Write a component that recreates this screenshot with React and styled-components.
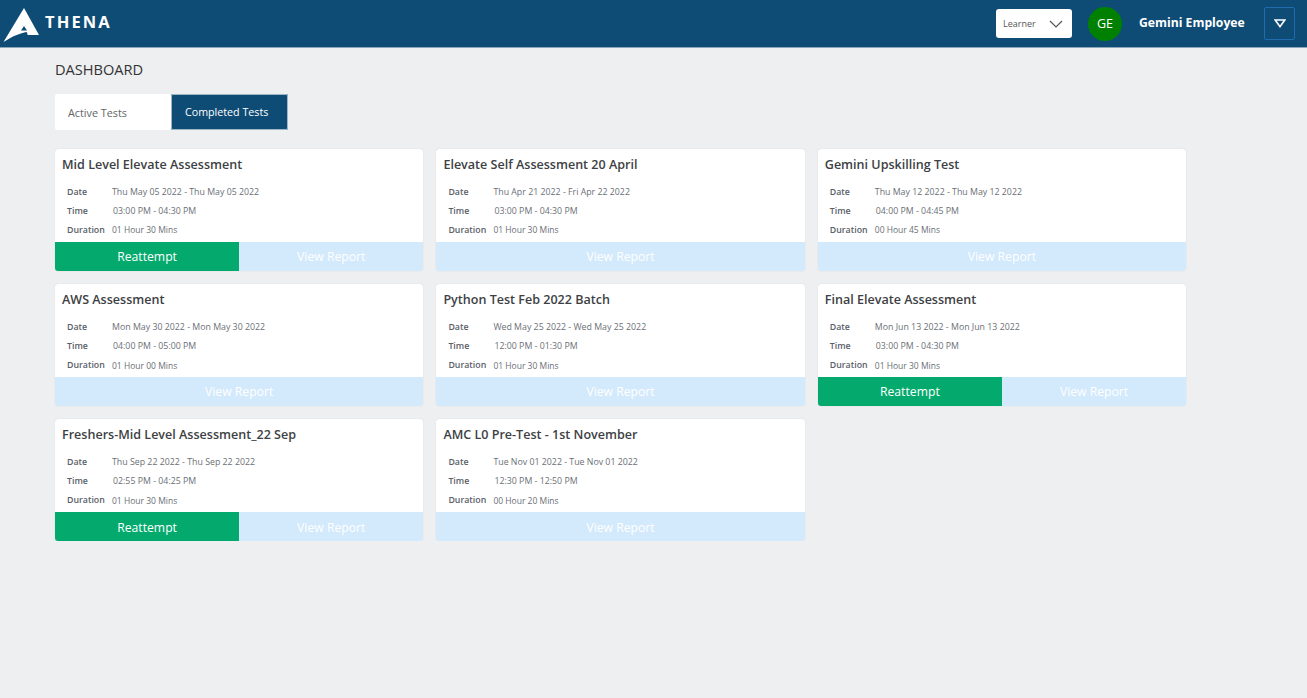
import styled, { createGlobalStyle } from 'styled-components';

const tests = [
    { title: 'Mid Level Elevate Assessment', date: 'Thu May 05 2022 - Thu May 05 2022', time: '03:00 PM - 04:30 PM', duration: '01 Hour 30 Mins', reattempt: true },
    { title: 'Elevate Self Assessment 20 April', date: 'Thu Apr 21 2022 - Fri Apr 22 2022', time: '03:00 PM - 04:30 PM', duration: '01 Hour 30 Mins' },
    { title: 'Gemini Upskilling Test', date: 'Thu May 12 2022 - Thu May 12 2022', time: '04:00 PM - 04:45 PM', duration: '00 Hour 45 Mins' },
    { title: 'AWS Assessment', date: 'Mon May 30 2022 - Mon May 30 2022', time: '04:00 PM - 05:00 PM', duration: '01 Hour 00 Mins' },
    { title: 'Python Test Feb 2022 Batch', date: 'Wed May 25 2022 - Wed May 25 2022', time: '12:00 PM - 01:30 PM', duration: '01 Hour 30 Mins' },
    { title: 'Final Elevate Assessment', date: 'Mon Jun 13 2022 - Mon Jun 13 2022', time: '03:00 PM - 04:30 PM', duration: '01 Hour 30 Mins', reattempt: true },
    { title: 'Freshers-Mid Level Assessment_22 Sep', date: 'Thu Sep 22 2022 - Thu Sep 22 2022', time: '02:55 PM - 04:25 PM', duration: '01 Hour 30 Mins', reattempt: true },
    { title: 'AMC L0 Pre-Test - 1st November', date: 'Tue Nov 01 2022 - Tue Nov 01 2022', time: '12:30 PM - 12:50 PM', duration: '00 Hour 20 Mins' },
];

function TestCard({ test }) {
    return (
        <Card>
            <CardTitle>{test.title}</CardTitle>
            <Details>
                <Label>Date</Label>
                <Value>{test.date}</Value>
                <Label>Time</Label>
                <Value $indent>{test.time}</Value>
                <Label>Duration</Label>
                <Value $small>{test.duration}</Value>
            </Details>
            <Actions>
                {test.reattempt && <ReattemptButton>Reattempt</ReattemptButton>}
                <ReportButton>View Report</ReportButton>
            </Actions>
        </Card>
    );
}

function App() {
    return (
        <>
            <GlobalStyle />
            <Header>
                <Logo>
                    <svg width="40" height="38" viewBox="0 0 40 38">
                        <path
                            fill="#fff"
                            fillRule="evenodd"
                            d="M21 3 L36 30 H24.5 Q24.5 27 23 27 Q13 29 0.5 37 Z M21 21 L18 25.5 H24 Z"
                        />
                    </svg>
                    <LogoText>THENA</LogoText>
                </Logo>
                <HeaderRight>
                    <RoleSelect>
                        <span>Learner</span>
                        <svg width="14" height="8" viewBox="0 0 14 8">
                            <path d="M1 1 L7 7 L13 1" fill="none" stroke="#555" strokeWidth="1.2" />
                        </svg>
                    </RoleSelect>
                    <Avatar>GE</Avatar>
                    <UserName>Gemini Employee</UserName>
                    <MenuButton>
                        <svg width="12" height="9" viewBox="0 0 12 9">
                            <path d="M1.2 1 H10.8 L6 7.6 Z" fill="none" stroke="#fff" strokeWidth="1.6" />
                        </svg>
                    </MenuButton>
                </HeaderRight>
            </Header>
            <Main>
                <PageTitle>DASHBOARD</PageTitle>
                <Tabs>
                    <Tab>Active Tests</Tab>
                    <Tab $active>Completed Tests</Tab>
                </Tabs>
                <CardGrid>
                    {tests.map((test) => (
                        <TestCard key={test.title} test={test} />
                    ))}
                </CardGrid>
            </Main>
        </>
    );
}

const GlobalStyle = createGlobalStyle`
    html, body {
        margin: 0;
        min-height: 100%;
        background: #eeeff1;
        font-family: "Open Sans", "Noto Sans", sans-serif;
    }
    * {
        box-sizing: border-box;
    }
`;

const Header = styled.header`
    height: 48px;
    background: #0f4c75;
    border-bottom: 1px solid #8ba6b9;
    display: flex;
    align-items: center;
    justify-content: space-between;
    padding: 0 12px 0 3px;
`;

const Logo = styled.div`
    display: flex;
    align-items: center;
    height: 100%;
`;

const LogoText = styled.span`
    color: #fff;
    font-size: 16.5px;
    font-weight: 700;
    letter-spacing: 2.1px;
    margin: 0 0 4px 2px;
`;

const HeaderRight = styled.div`
    display: flex;
    align-items: center;
`;

const RoleSelect = styled.div`
    width: 76px;
    height: 29px;
    background: #fff;
    border-radius: 3px;
    display: flex;
    align-items: center;
    justify-content: space-between;
    padding: 0 9px 0 7px;
    color: #555;
    font-size: 9px;
`;

const Avatar = styled.div`
    width: 34px;
    height: 34px;
    border-radius: 50%;
    background: #008000;
    color: #fff;
    font-size: 12.5px;
    display: flex;
    align-items: center;
    justify-content: center;
    margin-left: 16px;
`;

const UserName = styled.div`
    color: #fff;
    font-size: 12.2px;
    font-weight: 700;
    margin: 0 0 2px 17px;
    width: 125px;
`;

const MenuButton = styled.div`
    width: 31px;
    height: 33px;
    border: 1px solid #1f6cb0;
    border-radius: 2px;
    display: flex;
    align-items: center;
    justify-content: center;
`;

const Main = styled.main`
    padding: 12px 0 0 55px;
`;

const PageTitle = styled.h1`
    margin: 0;
    font-size: 14.6px;
    font-weight: 400;
    line-height: 19px;
    color: #333;
`;

const Tabs = styled.div`
    display: flex;
    margin-top: 15px;
`;

const Tab = styled.div`
    width: ${(p) => (p.$active ? '117px' : '116px')};
    height: 36px;
    display: flex;
    align-items: center;
    padding-left: ${(p) => (p.$active ? '14px' : '13px')};
    font-size: ${(p) => (p.$active ? '10.7px' : '10.8px')};
    background: ${(p) => (p.$active ? '#0f4c75' : '#fff')};
    color: ${(p) => (p.$active ? '#fff' : '#666')};
    box-shadow: ${(p) => (p.$active ? 'inset 0 0 0 1px #9fb6c6' : 'none')};
    border-radius: 2px;
`;

const CardGrid = styled.div`
    display: grid;
    grid-template-columns: repeat(3, 368.3px);
    column-gap: 13.1px;
    row-gap: 13.2px;
    margin-top: 19px;
`;

const Card = styled.div`
    height: 122px;
    background: #fff;
    box-shadow: 0 0 1px rgba(0, 0, 0, 0.2);
    border-radius: 3px;
    display: flex;
    flex-direction: column;
    overflow: hidden;
`;

const CardTitle = styled.h2`
    margin: 7px 0 0 7px;
    font-size: 12.55px;
    font-weight: 600;
    line-height: 18px;
    color: #3d3f44;
`;

const Details = styled.div`
    display: grid;
    grid-template-columns: 45px 1fr;
    grid-auto-rows: 19px;
    margin: 8.4px 0 0 12px;
    font-size: 8.8px;
    align-items: center;
`;

const Label = styled.span`
    font-weight: 600;
    color: #5a6068;
`;

const Value = styled.span`
    color: #6b6f76;
    margin-left: ${(p) => (p.$indent ? '1px' : '0')};
    font-size: ${(p) => (p.$small ? '8.5px' : '8.8px')};
    white-space: nowrap;
`;

const Actions = styled.div`
    display: flex;
    margin-top: auto;
    height: 29.5px;
`;

const ActionButton = styled.div`
    flex: 1;
    display: flex;
    align-items: center;
    justify-content: center;
    padding-top: 1px;
    font-size: 12.2px;
    color: #fff;
`;

const ReattemptButton = styled(ActionButton)`
    background: #04aa6d;
`;

const ReportButton = styled(ActionButton)`
    background: #d3e9fc;
`;

export default App;
